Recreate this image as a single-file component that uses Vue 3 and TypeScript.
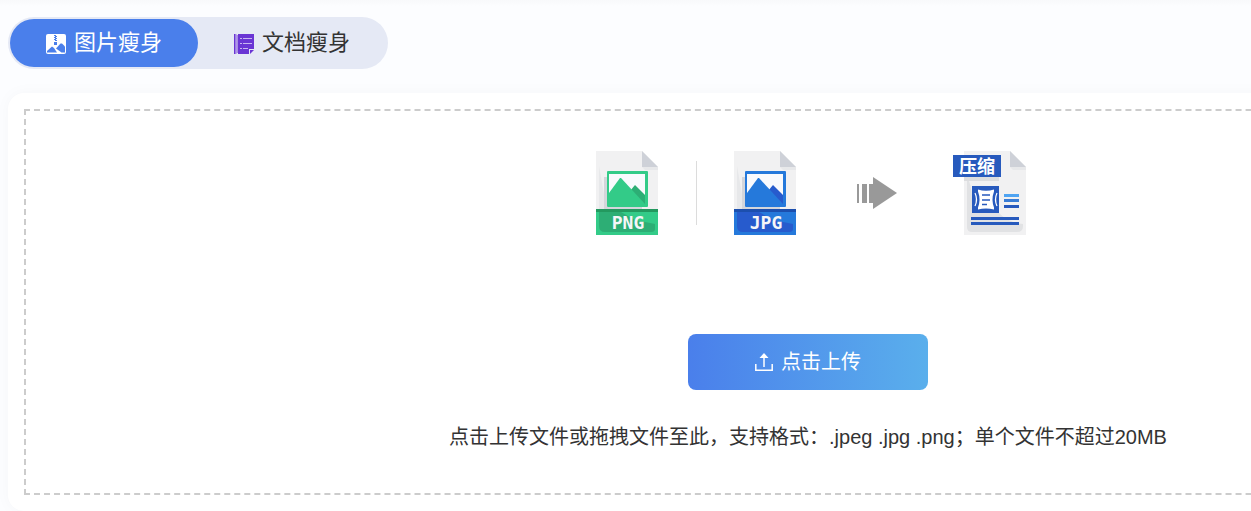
<script setup lang="ts">
import { ref } from 'vue'

type TabKey = 'image' | 'document'

interface SourceFormat {
  label: string
  main: string
  deep: string
  strip: string
}

const tabs: { key: TabKey; label: string }[] = [
  { key: 'image', label: '图片瘦身' },
  { key: 'document', label: '文档瘦身' },
]

const formats: SourceFormat[] = [
  { label: 'PNG', main: '#33cb88', deep: '#2dae75', strip: '#23995f' },
  { label: 'JPG', main: '#2579db', deep: '#275bcd', strip: '#1c4fae' },
]

const active = ref<TabKey>('image')
const picker = ref<HTMLInputElement | null>(null)

function openPicker(): void {
  picker.value?.click()
}
</script>

<template>
  <main class="page">
    <div class="tabs" role="tablist">
      <button
        v-for="tab in tabs"
        :key="tab.key"
        type="button"
        role="tab"
        class="tab"
        :class="{ active: active === tab.key }"
        :aria-selected="active === tab.key"
        @click="active = tab.key"
      >
        <svg v-if="tab.key === 'image'" class="tab-icon" viewBox="0 0 20 20" aria-hidden="true">
          <rect width="20" height="20" rx="2" fill="#fff" />
          <path
            d="M8 1h2v1H8zM9 2h2v1H9zM8 3h2v1H8zM9 4h2v1H9zM8 5h2v1H8zM9 6h2v1H9zM8 8h3v3H8z"
            fill="#4a7feb"
          />
          <path d="M1 18.500V17l5-4.500 2 1.500 3 4.500z" fill="#4a7feb" />
          <path d="M10 14.500 14.500 9.500h1.500l3 3v6h-3.500z" fill="#4a7feb" />
        </svg>
        <svg v-else class="tab-icon" viewBox="0 0 20 20" aria-hidden="true">
          <path d="M4 0h16v15h-5v5H4z" fill="#6a35d4" />
          <path d="M16 16h4l-4 4z" fill="#6a35d4" />
          <path d="M.7 0v20" stroke="#6a35d4" stroke-width="1.400" />
          <path d="M2 .5v19.500" stroke="#6a35d4" stroke-width="1.200" stroke-dasharray="1 1" />
          <path d="M3.300 1.500v18" stroke="#6a35d4" stroke-width="1.400" stroke-dasharray="1 1" />
          <path
            d="M6 4.500h2M6 9.500h2M6 14.500h2M9 4.500h9M9 9.500h9M9 14.500h5"
            stroke="#c8b5f1"
            stroke-width="1.200"
          />
        </svg>
        <span>{{ tab.label }}</span>
      </button>
    </div>

    <section class="card">
      <div class="dropzone">
        <div class="flow">
          <template v-for="(format, index) in formats" :key="format.label">
            <span v-if="index > 0" class="divider"></span>
            <svg class="file-icon" viewBox="0 0 62 84" role="img" :aria-label="format.label">
              <path d="M0 0h46l16 16v68H0z" fill="#f1f1f2" />
              <path d="M46 16h16v3H49z" fill="#e7e8ea" />
              <path d="M46 0l16 16H46z" fill="#ced1d8" />
              <path d="M3 15l5 28v15H3z" fill="#e7e8ea" />
              <path d="M8 26h3v30h35v2H8z" fill="#d4d6db" />
              <rect x="11" y="20" width="41" height="36" rx="1" :fill="format.main" />
              <rect x="13" y="23" width="36" height="31" fill="#f9fafd" />
              <path d="M34 40l5-6 10 10v10H44z" :fill="format.deep" />
              <path d="M13 42l11-15h1l24 26v1H13z" :fill="format.main" />
              <path d="M0 58h62v26H0z" :fill="format.main" />
              <path d="M3 61h22l14 8 20 4v5q0 3-4 3H9q-6 0-6-6z" :fill="format.deep" />
              <path d="M0 58h62v3H0z" :fill="format.strip" />
              <text class="file-label" x="32" y="78" text-anchor="middle">{{ format.label }}</text>
            </svg>
          </template>

          <svg class="arrow-icon" viewBox="0 0 41 34" aria-hidden="true">
            <path d="M1 8h2v19H1zM6 8h5v19H6zM13 8h4V1l24 16-24 16v-6h-4z" fill="#999" />
          </svg>

          <svg class="result-icon" viewBox="0 0 74 84" role="img" aria-label="压缩">
            <path d="M12 0h46l16 16v68H12z" fill="#f1f1f2" />
            <path d="M58 16h16v3H61z" fill="#e7e8ea" />
            <path d="M58 0l16 16H58z" fill="#ced1d8" />
            <path d="M15 30h2q3 8 3 20v12h27q8 9 24 11v2q0 6-6 6H20q-5 0-5-5z" fill="#e1e2e4" />
            <path d="M12 26h35v4H12z" fill="#dcdddf" />
            <path d="M1 4h48v22H1z" fill="#275abd" />
            <text class="result-label" x="25" y="22" text-anchor="middle">压缩</text>
            <path d="M20 35h27v27H20z" fill="#275abd" />
            <path
              d="M26 38.500q8 2.500 16 0v2q-3 8 0 16v2q-8-2-16 0v-2q3-8 0-16z"
              fill="#fff"
            />
            <path d="M30 44h8M30 49h8M30 53.500h5" stroke="#275abd" stroke-width="1.300" />
            <path
              d="M23 42q3 6.500 0 13M45 42q-3 6.500 0 13"
              fill="none"
              stroke="#fff"
              stroke-width="1.200"
            />
            <path d="M52 43h15v3H52z" fill="#4fa4f2" />
            <path d="M52 48h15v3H52z" fill="#387cd5" />
            <path d="M52 54h15v3H52zM19 66h48v3H19zM19 71h48v3H19z" fill="#275abd" />
          </svg>
        </div>

        <button type="button" class="upload" @click="openPicker">
          <svg class="upload-icon" viewBox="0 0 20 20" aria-hidden="true">
            <path d="M.8 12v6.200h16.400V12M9 15V4" fill="none" stroke="#fff" stroke-width="1.500" />
            <path d="M9 1l4.500 5h-9z" fill="#fff" />
          </svg>
          <span>点击上传</span>
        </button>
        <input
          ref="picker"
          class="picker"
          type="file"
          accept=".jpeg,.jpg,.png"
          aria-label="点击上传"
          multiple
        />

        <p class="hint">点击上传文件或拖拽文件至此，支持格式：.jpeg .jpg .png；单个文件不超过20MB</p>
      </div>
    </section>
  </main>
</template>

<style>
body {
  margin: 0;
  background: #fcfdff;
}
</style>

<style scoped>
.page {
  box-sizing: border-box;
  overflow: hidden;
  padding: 17px 8px 0;
  background: linear-gradient(#f8f9fb, #fcfdff 6px);
  font-family: "Liberation Sans", "Noto Sans CJK SC", sans-serif;
  color: #333;
}

.tabs {
  display: flex;
  width: fit-content;
  padding: 2px;
  border-radius: 26px;
  background: #e5e9f5;
}

.tab {
  display: flex;
  align-items: center;
  gap: 8px;
  height: 48px;
  padding: 0 36px;
  border: 0;
  border-radius: 24px;
  background: transparent;
  color: #333;
  font: inherit;
  font-size: 22px;
  line-height: 32px;
  cursor: pointer;
}

.tab.active {
  background: #4a7feb;
  color: #fff;
}

.tab-icon {
  width: 20px;
  height: 20px;
  margin-top: 2px;
}

.card {
  box-sizing: border-box;
  min-width: 1600px;
  margin-top: 24px;
  padding: 16px;
  border-radius: 16px;
  background: #fff;
  box-shadow: 0 0 16px rgba(0, 0, 0, 0.03);
}

.dropzone {
  display: flex;
  flex-direction: column;
  align-items: center;
  padding: 40px 0;
  border: 2px dashed #ccc;
}

.flow {
  display: flex;
  align-items: center;
  padding-left: 6px;
}

.divider {
  width: 1px;
  height: 64px;
  margin: 0 37px 0 38px;
  background: #dcdcdc;
}

.file-icon {
  width: 62px;
  height: 84px;
}

.arrow-icon {
  width: 41px;
  height: 34px;
  margin: 0 55px 0 60px;
}

.result-icon {
  width: 74px;
  height: 84px;
}

.file-label {
  fill: #f5f6f8;
  font-family: "DejaVu Sans Mono", monospace;
  font-size: 18px;
  font-weight: 700;
}

.result-label {
  fill: #fff;
  font-family: "Noto Sans CJK SC", sans-serif;
  font-size: 18px;
  font-weight: 700;
}

.upload {
  display: flex;
  align-items: center;
  justify-content: center;
  gap: 6px;
  width: 240px;
  height: 56px;
  margin-top: 99px;
  padding: 0;
  border: 0;
  border-radius: 8px;
  background: linear-gradient(90deg, #4a7feb, #5aafec);
  color: #fff;
  font: inherit;
  font-size: 20px;
  line-height: 28px;
  cursor: pointer;
}

.upload-icon {
  width: 20px;
  height: 20px;
}

.picker {
  display: none;
}

.hint {
  margin: 32px 0 0;
  font-size: 20px;
  line-height: 31px;
  white-space: nowrap;
}
</style>
